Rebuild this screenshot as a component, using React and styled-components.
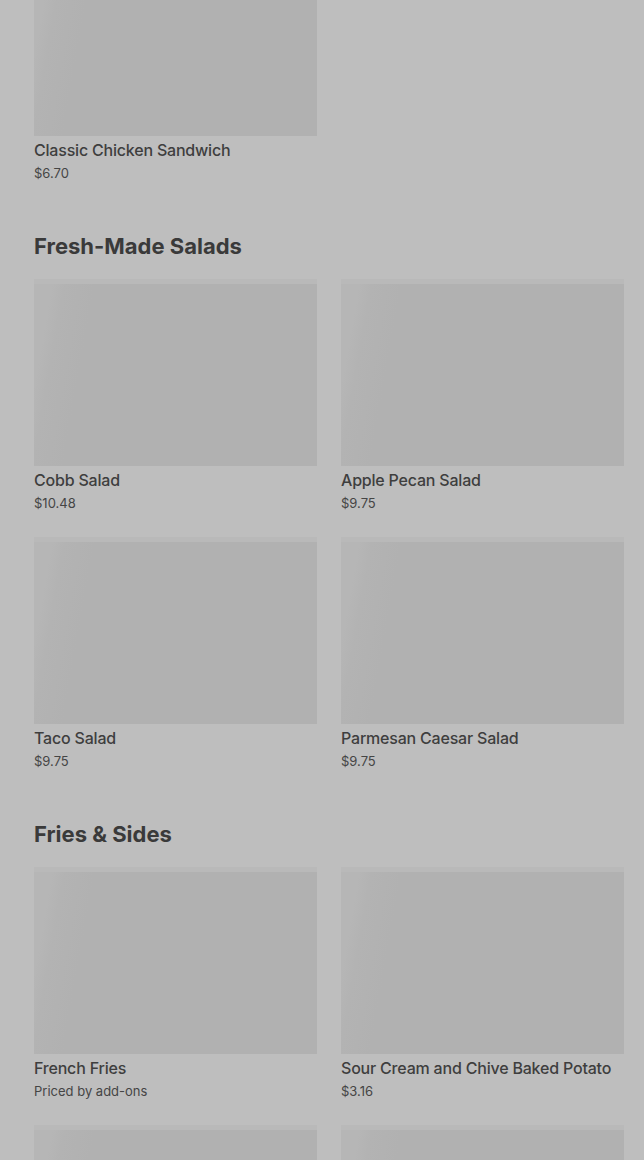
import styled, { createGlobalStyle } from 'styled-components';

const GlobalStyle = createGlobalStyle`
  html, body {
    margin: 0;
    padding: 0;
    background: #bebebe;
    overflow: hidden;
  }
  * {
    box-sizing: border-box;
  }
`;

const sections = [
  {
    title: null,
    items: [{ name: 'Classic Chicken Sandwich', price: '$6.70' }],
  },
  {
    title: 'Fresh-Made Salads',
    items: [
      { name: 'Cobb Salad', price: '$10.48' },
      { name: 'Apple Pecan Salad', price: '$9.75' },
      { name: 'Taco Salad', price: '$9.75' },
      { name: 'Parmesan Caesar Salad', price: '$9.75' },
    ],
  },
  {
    title: 'Fries & Sides',
    items: [
      { name: 'French Fries', price: 'Priced by add-ons' },
      { name: 'Sour Cream and Chive Baked Potato', price: '$3.16' },
      { name: '', price: '' },
      { name: '', price: '' },
    ],
  },
];

const App = () => {
  return (
    <>
      <GlobalStyle />
      <Page>
        <Menu>
          {sections.map((section, i) => (
            <Section key={i}>
              {section.title && <SectionTitle>{section.title}</SectionTitle>}
              <Grid>
                {section.items.map((item, j) => (
                  <Item key={j}>
                    <Thumb />
                    <ItemName>{item.name}</ItemName>
                    <ItemPrice>{item.price}</ItemPrice>
                  </Item>
                ))}
              </Grid>
            </Section>
          ))}
        </Menu>
      </Page>
    </>
  );
};

const Page = styled.div`
  width: 644px;
  height: 1160px;
  overflow: hidden;
  background: #bebebe;
  font-family: Inter, 'Liberation Sans', sans-serif;
  color: #3c3c3c;
`;

// the list is scrolled: the first card's photo is partly above the fold
const Menu = styled.div`
  margin-top: -51px;
  padding: 0 20px 0 34px;
  display: flex;
  flex-direction: column;
  gap: 49px;
`;

const Section = styled.section`
  display: flex;
  flex-direction: column;
`;

const SectionTitle = styled.h2`
  margin: 0 0 19px;
  font-size: 22px;
  line-height: 28px;
  font-weight: 700;
  letter-spacing: 0;
  color: #3a3a3a;
`;

const Grid = styled.div`
  display: grid;
  grid-template-columns: 283px 283px;
  column-gap: 24px;
  row-gap: 24px;
`;

const Item = styled.div`
  display: flex;
  flex-direction: column;
`;

const Thumb = styled.div`
  height: 187px;
  background: linear-gradient(
    100deg,
    #b6b6b6 0px,
    #b6b6b6 18px,
    #b3b3b3 30px,
    #b1b1b1 60px,
    #b1b1b1 100%
  );
  border-top: 5px solid #b9b9b9;
  margin-bottom: 4px;
`;

const ItemName = styled.div`
  font-size: 16px;
  line-height: 20px;
  font-weight: 500;
  letter-spacing: -0.2px;
  color: #3e3e3e;
  min-height: 20px;
`;

const ItemPrice = styled.div`
  margin-top: 3px;
  font-size: 13px;
  line-height: 20px;
  font-weight: 400;
  letter-spacing: 0;
  color: #454545;
  min-height: 20px;
`;

export default App;
